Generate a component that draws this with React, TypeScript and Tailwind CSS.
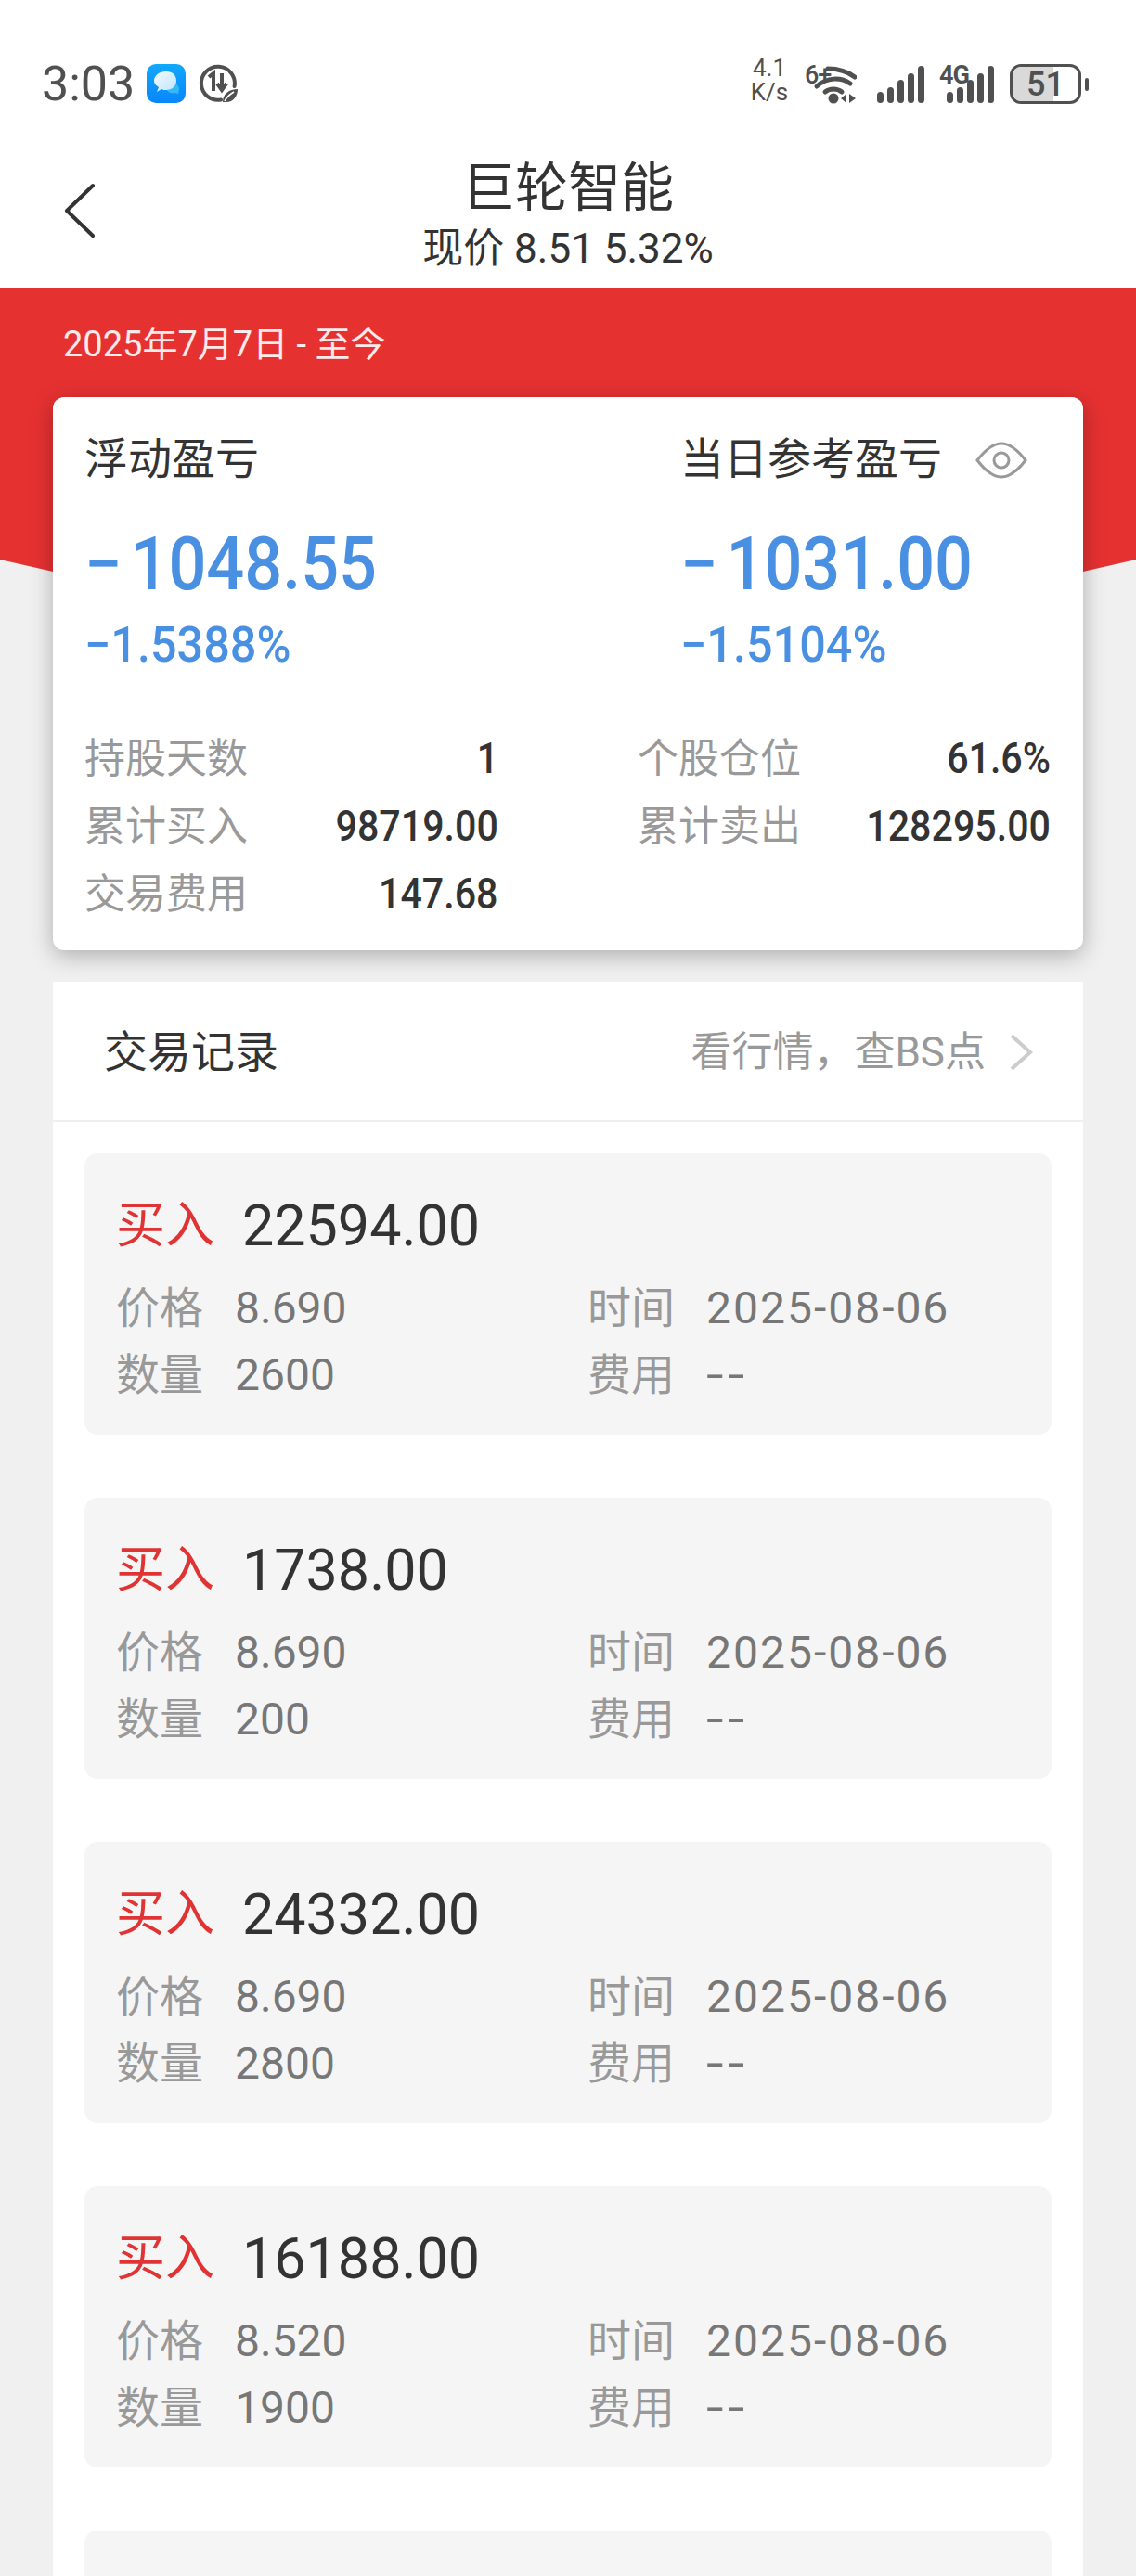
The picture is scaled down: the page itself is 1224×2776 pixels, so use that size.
const trades = [
  { amount: '22594.00', price: '8.690', qty: '2600' },
  { amount: '1738.00', price: '8.690', qty: '200' },
  { amount: '24332.00', price: '8.690', qty: '2800' },
  { amount: '16188.00', price: '8.520', qty: '1900' },
];

const stats = [
  { label: '持股天数', value: '1' },
  { label: '个股仓位', value: '61.6%' },
  { label: '累计买入', value: '98719.00' },
  { label: '累计卖出', value: '128295.00' },
  { label: '交易费用', value: '147.68' },
];

function MessageIcon() {
  return (
    <svg width="42" height="42" viewBox="0 0 42 42">
      <defs>
        <linearGradient id="msgBg" x1="0" y1="0" x2="0" y2="1">
          <stop offset="0" stopColor="#10a8fb" />
          <stop offset="1" stopColor="#0a86fb" />
        </linearGradient>
        <linearGradient id="msgBubble" x1="0" y1="0" x2="1" y2="1">
          <stop offset="0" stopColor="#f4fafe" />
          <stop offset="1" stopColor="#bfe4fb" />
        </linearGradient>
      </defs>
      <rect width="42" height="42" rx="10" fill="url(#msgBg)" />
      <path d="M27 20c4 0 8 3 8 7 0 2-1 3-1 5l-3-1c-3 1-8 0-9-3z" fill="#35b9f2" />
      <path d="M21 8c7 0 11 4 11 10s-5 10-11 10c-2 0-3 0-5-1l-5 3 2-5c-3-2-5-4-5-7 0-6 6-10 13-10z" fill="url(#msgBubble)" />
    </svg>
  );
}

function DataSaverIcon() {
  return (
    <svg width="42" height="42" viewBox="0 0 42 42" fill="none">
      <path d="M24 38.500A18 18 0 1 1 38.600 24" stroke="#505050" strokeWidth="4" strokeLinecap="round" />
      <path d="M11 14l5-4v19" stroke="#505050" strokeWidth="4" />
      <path d="M25 10v17M20 21l5 7 5-7" stroke="#505050" strokeWidth="4" />
      <path d="M26 41c0-9 7-14 16-14 0 8-5 14-12 14z" fill="#505050" />
      <path d="M28 40c2-4 5-7 10-10" stroke="#fff" strokeWidth="1.500" />
    </svg>
  );
}

function SignalBars({ width }: { width: number }) {
  const xs = [0, 11, 22, 33, 44];
  const hs = [12, 17, 25, 32, 40];
  return (
    <svg width={width} height="40" viewBox={`0 0 ${width} 40`}>
      {xs.map((x, i) => (
        <rect key={x} x={x} y={40 - hs[i]} width="7" height={hs[i]} rx="3.500" fill="#505050" />
      ))}
    </svg>
  );
}

function WifiIcon() {
  return (
    <svg width="56" height="44" viewBox="0 0 56 44" fill="none" stroke="#505050" strokeWidth="5" strokeLinecap="round">
      <path d="M25 6c11 0 21 3 29 9" />
      <path d="M13 25c11-10 26-10 36-3" />
      <path d="M22 31c5-4 13-4 18 0" />
      <circle cx="31" cy="38" r="5.500" fill="#505050" stroke="none" />
      <path d="M45 33l-6 5 6 5zM48 33l7 5-7 5z" fill="#505050" stroke="none" />
    </svg>
  );
}

function StatusBar() {
  return (
    <div className="flex h-[113px] items-end justify-between pl-[45px] pr-[51px]">
      <div className="mb-[2px] flex items-center">
        <span className="w-[113px] text-[52px] leading-[41px] text-[#505050]">3:03</span>
        <MessageIcon />
        <span className="ml-[14px] flex">
          <DataSaverIcon />
        </span>
      </div>
      <div className="mb-[1px] flex items-end text-[#505050]">
        <div className="flex w-[42px] flex-col items-center text-[26px] leading-[26px]">
          <span>4.1</span>
          <span>K/s</span>
        </div>
        <div className="relative ml-[17px] w-[56px]">
          <span className="absolute left-0 top-[2px] text-[27px] font-medium leading-[22px] tracking-[-1px]">6+</span>
          <WifiIcon />
        </div>
        <div className="ml-[22px] mb-[1px] flex">
          <SignalBars width={52} />
        </div>
        <div className="relative ml-[15px] mb-[1px] flex w-[60px] justify-end">
          <span className="absolute left-0 top-[-1px] text-[27px] font-bold leading-[22px] tracking-[-1px]">4G</span>
          <SignalBars width={52} />
        </div>
        <div className="ml-[16px] flex items-center">
          <div className="relative h-[43px] w-[77px] overflow-hidden rounded-[12px] border-[3px] border-[#505050]">
            <div className="h-full w-[44px] bg-[#d9d9d9]" />
            <span className="absolute inset-0 flex items-center justify-center text-[36px] font-medium leading-none">51</span>
          </div>
          <div className="ml-[4px] h-[14px] w-[4px] rounded-full bg-[#505050]" />
        </div>
      </div>
    </div>
  );
}

function NavBar() {
  return (
    <div className="relative flex h-[197px] flex-col items-center">
      <svg className="absolute left-[68px] top-[84px]" width="36" height="60" viewBox="0 0 36 60" fill="none">
        <path d="M32 3L4 30l28 27" stroke="#333" strokeWidth="4" strokeLinecap="round" strokeLinejoin="round" />
      </svg>
      <div className="mt-[56px] text-[57px] leading-[68px] text-[#333]">巨轮智能</div>
      <div className="mt-[7px] text-[44px] leading-[48px] text-[#333]">现价 8.51 5.32%</div>
    </div>
  );
}

function Metric({ title, value, pct }: { title: string; value: string; pct: string }) {
  return (
    <div>
      <div className="pt-[2px] text-[47px] leading-[56px] text-[#333]">{title}</div>
      <div className="mt-[43px] origin-left scale-x-[0.9] text-[80px] font-medium leading-[84px] text-[#4a90e2] first-letter:mr-[10px]">
        {value}
      </div>
      <div className="mt-[15px] origin-left scale-x-[0.95] text-[53px] font-medium leading-[60px] text-[#4a90e2]">
        {pct}
      </div>
    </div>
  );
}

function SummaryCard() {
  return (
    <div className="relative mx-[57px] mt-[33px] h-[596px] rounded-[12px] bg-white pl-[34px] pr-[35px] pt-[37px] shadow-[0_6px_24px_rgba(0,0,0,0.28)]">
      <div className="relative flex">
        <div className="w-[642px]">
          <Metric title="浮动盈亏" value="−1048.55" pct="−1.5388%" />
        </div>
        <Metric title="当日参考盈亏" value="−1031.00" pct="−1.5104%" />
        <svg className="absolute left-[960px] top-[11px]" width="56" height="40" viewBox="0 0 56 40" fill="none" stroke="#999" strokeWidth="3">
          <path d="M2 20C12 7 20 2 28 2s16 5 26 18c-10 13-18 18-26 18S12 33 2 20z" />
          <circle cx="28" cy="20" r="8" />
        </svg>
      </div>
      <div className="mt-[56px] grid grid-cols-[446px_445px] gap-x-[150px]">
        {stats.map((s) => (
          <div key={s.label} className="flex h-[73px] items-center justify-between">
            <span className="text-[44px] text-[#999]">{s.label}</span>
            <span className="origin-right scale-x-[0.895] text-[46px] font-medium text-[#333]">{s.value}</span>
          </div>
        ))}
      </div>
    </div>
  );
}

function TradeCard({ amount, price, qty }: { amount: string; price: string; qty: string }) {
  return (
    <div className="mb-[68px] h-[303px] rounded-[14px] bg-[#f5f5f5] pl-[34px] pt-[44px]">
      <div className="flex h-[68px] items-center">
        <span className="w-[136px] text-[53px] leading-none text-[#e03434]">买入</span>
        <span className="text-[61px] leading-none text-[#333]">{amount}</span>
      </div>
      <div className="mt-[19px] grid grid-cols-[508px_1fr] text-[47px] leading-[72px]">
        <div className="flex">
          <span className="w-[128px] text-[#999]">价格</span>
          <span className="text-[48px] text-[#777]">{price}</span>
        </div>
        <div className="flex">
          <span className="w-[128px] text-[#999]">时间</span>
          <span className="text-[48px] tracking-[2px] text-[#777]">2025-08-06</span>
        </div>
        <div className="flex">
          <span className="w-[128px] text-[#999]">数量</span>
          <span className="text-[48px] text-[#777]">{qty}</span>
        </div>
        <div className="flex">
          <span className="w-[128px] text-[#999]">费用</span>
          <span className="origin-left scale-x-[1.4] text-[48px] tracking-[3px] text-[#777]">--</span>
        </div>
      </div>
    </div>
  );
}

export default function App() {
  return (
    <div className="h-[2776px] w-[1224px] overflow-hidden bg-[#f0f0f0] font-['Roboto','Noto_Sans_CJK_SC',sans-serif]">
      <div className="bg-white">
        <StatusBar />
        <NavBar />
      </div>
      <div className="relative">
        {/* red band with the curved lower edge, mostly hidden by the card */}
        <svg className="absolute left-0 top-0" width="1224" height="320" viewBox="0 0 1224 320">
          <path d="M0 0H1224V293Q900 370 612 370T0 293Z" fill="#e63131" />
        </svg>
        <div className="relative">
          <div className="ml-[68px] pt-[37px] text-[38px] leading-[48px] text-white/90">2025年7月7日 - 至今</div>
          <SummaryCard />
        </div>
      </div>
      <div className="mx-[57px] mt-[34px] bg-white">
        <div className="flex h-[151px] items-center justify-between border-b-[2px] border-[#f0f0f0] pl-[55px] pr-[54px] pt-[3px]">
          <span className="text-[47px] text-[#333]">交易记录</span>
          <div className="flex items-center">
            <span className="text-[44px] text-[#999]">{'看行情\uFF0C查BS点'}</span>
            <svg className="ml-[25px]" width="26" height="40" viewBox="0 0 26 40" fill="none">
              <path d="M3 2l20 18L3 38" stroke="#ccc" strokeWidth="4" />
            </svg>
          </div>
        </div>
        <div className="px-[34px] pt-[34px]">
          {trades.map((t) => (
            <TradeCard key={t.amount} {...t} />
          ))}
          <div className="h-[303px] rounded-[14px] bg-[#f5f5f5]" />
        </div>
      </div>
    </div>
  );
}
